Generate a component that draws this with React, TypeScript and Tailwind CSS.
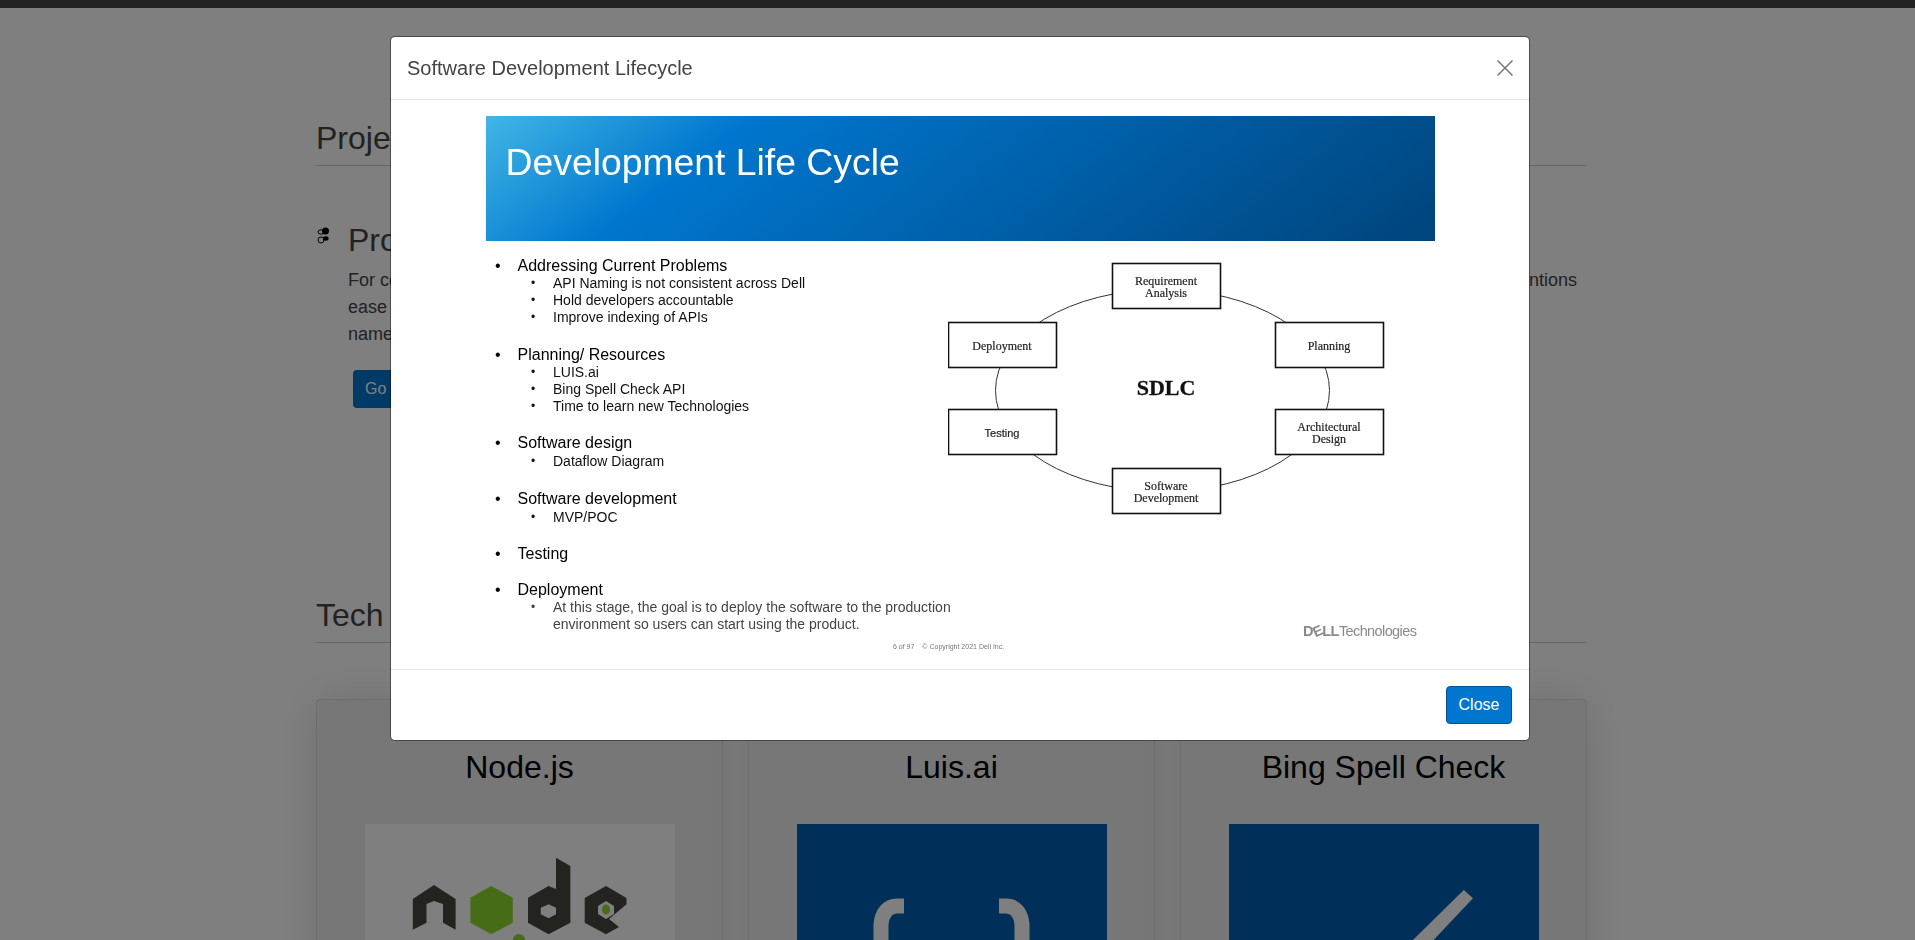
const sans = "font-['Liberation_Sans',Arial,sans-serif]";

type Group = { title: string; subs: string[]; muted?: boolean; gap: string; subGap?: string };

const groups: Group[] = [
  { title: "Addressing Current Problems", gap: "mt-0", subs: ["API Naming is not consistent across Dell", "Hold developers accountable", "Improve indexing of APIs"] },
  { title: "Planning/ Resources", gap: "mt-[20px]", subs: ["LUIS.ai", "Bing Spell Check API", "Time to learn new Technologies"] },
  { title: "Software design", gap: "mt-[19px]", subGap: "mt-px", subs: ["Dataflow Diagram"] },
  { title: "Software development", gap: "mt-[20px]", subGap: "mt-px", subs: ["MVP/POC"] },
  { title: "Testing", gap: "mt-[19px]", subs: [] },
  { title: "Deployment", gap: "mt-[18px]", subs: ["At this stage, the goal is to deploy the software to the production\nenvironment so users can start using the product."], muted: true },
];

function Diagram() {
  const serif = "'Liberation Serif',serif";
  const boxes = [
    { x: 164, y: 22, lines: ["Requirement", "Analysis"] },
    { x: 0, y: 81, lines: ["Deployment"] },
    { x: 327, y: 81, lines: ["Planning"] },
    { x: 0, y: 168, lines: ["Testing"], sans: true },
    { x: 327, y: 168, lines: ["Architectural", "Design"] },
    { x: 164, y: 227, lines: ["Software", "Development"] },
  ];
  return (
    <svg width="440" height="290" viewBox="0 0 440 290" className="block shrink-0">
      <ellipse cx="214.5" cy="149.5" rx="167" ry="101" fill="none" stroke="#333" strokeWidth="1" />
      {boxes.map((b) => (
        <g key={b.lines[0]}>
          <rect x={b.x + 0.5} y={b.y + 0.5} width="108" height="45" fill="#fff" stroke="#111" strokeWidth="1.6" />
          {b.lines.map((l, i) => (
            <text
              key={l}
              x={b.x + 54}
              y={b.y + 28 + (i - (b.lines.length - 1) / 2) * 12.4}
              textAnchor="middle"
              fontSize={b.sans ? "11" : "12"}
              fontFamily={b.sans ? "'Liberation Sans',sans-serif" : serif}
              fill="#222"
              stroke="#222"
              strokeWidth="0.2"
            >
              {l}
            </text>
          ))}
        </g>
      ))}
      <text x="218" y="153.5" textAnchor="middle" fontSize="22" fontWeight="700" fontFamily={serif} fill="#111" stroke="#111" strokeWidth="0.3">SDLC</text>
    </svg>
  );
}

function Slide() {
  return (
    <div className="ml-[95px] flex h-[537px] w-[949px] flex-col overflow-hidden bg-white">
      <div className="h-[125px] shrink-0 bg-[linear-gradient(142deg,#41b6e6_0%,#0076ce_24%,#00447c_100%)] pl-[19.5px] pt-[24px] text-[37.33px] leading-[44px] text-white">
        Development Life Cycle
      </div>
      <div className="flex flex-1">
        <div className="w-[462px] shrink-0 pt-[16px]">
          <div className="flex flex-col">
            {groups.map((g) => (
              <div key={g.title} className={g.gap}>
                <div className="relative pl-[31.5px] text-[16px] leading-[18px] text-black">
                  <span className="absolute left-[9px] top-0">•</span>
                  {g.title}
                </div>
                {g.subs.map((s) => (
                  <div key={s} className={`relative whitespace-pre pl-[67px] text-[14px] leading-[17px] ${g.subGap ?? ""} ${g.muted ? "text-[#444]" : "text-[#111]"}`}>
                    <span className="absolute left-[45px] top-0 text-[12px]">•</span>
                    {s}
                  </div>
                ))}
              </div>
            ))}
          </div>
          <div className="mt-[9px] whitespace-nowrap pl-[407px] text-[7px] leading-[10px] text-[#777]">
            6 of 97 <span className="ml-[6px]">© Copyright 2021 Dell Inc.</span>
          </div>
        </div>
        <div className="flex flex-1 flex-col">
          <Diagram />
          <div className="mt-[93px] whitespace-nowrap pl-[355px] text-[14.5px] leading-[14px] text-[#8a8a8a]">
            <span className="font-bold tracking-[-0.5px]">D<span className="inline-block -rotate-[25deg]">E</span>LL</span>
            <span className="tracking-[-0.6px]">Technologies</span>
          </div>
        </div>
      </div>
    </div>
  );
}

function NodeLogo() {
  return (
    <svg width="310" height="117" viewBox="0 0 310 117" className="block">
      <polygon fill="#46463f" points="69,61 90.6,75 90.6,105.7 78,98.7 78,80 69,77 61.5,80 61.5,98.7 47.8,105.7 47.8,75" />
      <polygon fill="#8cd82e" points="126.3,62 147.8,73.7 147.8,98.7 126.3,110.3 105.4,98.7 105.4,73.7" />
      <path fill="#46463f" fillRule="evenodd" d="M191 33.7 205.4 42V98.7L183.5 110.3 163 98.7V73.7L183.5 62 191 65ZM183.5 80.3 191 83.7V90.3L183.5 94.3 175.8 90.3V83.7Z" />
      <path fill="#46463f" fillRule="evenodd" d="M241 62 261.5 74V80.3L244 95 254 103 241 110.3 219.7 98.7V74ZM241 77 233 82V90L241 95 249 90V82Z" />
      <ellipse cx="241" cy="85.5" rx="4" ry="5" fill="#8cd82e" />
      <circle cx="154" cy="116" r="6" fill="#8cd82e" />
    </svg>
  );
}

function LuisLogo() {
  return (
    <svg width="310" height="117" viewBox="0 0 310 117" className="block">
      <path d="M107 82H100C90 82 85 90 84 100V117" fill="none" stroke="#fff" strokeWidth="15" />
      <path d="M202 82H209C219 82 224 90 225 100V117" fill="none" stroke="#fff" strokeWidth="15" />
    </svg>
  );
}

function BingLogo() {
  return (
    <svg width="310" height="117" viewBox="0 0 310 117" className="block">
      <polygon fill="#fff" points="234.8,66 244,74.3 203.6,117 182.9,117" />
    </svg>
  );
}

function Card({ title, blue, children }: { title: string; blue?: boolean; children: React.ReactNode }) {
  return (
    <div className="h-[300px] rounded-[4px] border border-[#ddd] bg-[#eeeeee] pt-[48px] text-center shadow-[0_0_40px_rgba(0,0,0,0.12)]">
      <div className="text-[32px] leading-[38px] text-black">{title}</div>
      <div className={`mx-auto mt-[38px] h-[200px] w-[310px] ${blue ? "bg-[#0060b2]" : "bg-white"}`}>{children}</div>
    </div>
  );
}

function SmallIcon() {
  return (
    <svg width="16" height="18" viewBox="0 0 16 18" className="mt-[6px] shrink-0">
      <circle cx="9.5" cy="4" r="3.5" fill="#000" />
      <ellipse cx="9.8" cy="11.5" rx="2.8" ry="2.2" fill="#000" />
      <ellipse cx="5" cy="5" rx="3" ry="2.2" fill="none" stroke="#000" strokeWidth="1" />
      <circle cx="5" cy="13" r="3" fill="none" stroke="#000" strokeWidth="1" />
    </svg>
  );
}

function Page() {
  return (
    <div className="h-full bg-white">
      <div className="h-[8px] bg-[#444]" />
      <div className="ml-[316px] w-[1271px]">
        <h2 className="mt-[111px] border-b border-[#ccc] pb-[8px] text-[32px] leading-[38px] text-[#444]">Project</h2>
        <div className="mt-[55px] flex">
          <div className="w-[32px] shrink-0"><SmallIcon /></div>
          <div className="flex-1">
            <h3 className="text-[32px] leading-[38px] text-[#444]">Problem</h3>
            <div className="mt-[8px] text-[18px] leading-[27px] text-[#444]">
              <div className="flex justify-between pr-[10px]"><span>For consistent</span><span>conventions</span></div>
              <div>ease of use</div>
              <div>names</div>
            </div>
            <button className="ml-[5px] mt-[22px] h-[38px] rounded-[4px] bg-[#0076ce] px-[12px] text-[16px] text-white">Go to</button>
          </div>
        </div>
        <h2 className="mt-[188px] border-b border-[#ccc] pb-[8px] text-[32px] leading-[38px] text-[#444]">Tech Stack</h2>
        <div className="mt-[56px] grid grid-cols-3 gap-[25px]">
          <Card title="Node.js"><NodeLogo /></Card>
          <Card title="Luis.ai" blue><LuisLogo /></Card>
          <Card title="Bing Spell Check" blue><BingLogo /></Card>
        </div>
      </div>
    </div>
  );
}

export default function App() {
  return (
    <div className={`relative h-[940px] overflow-hidden ${sans}`}>
      <Page />
      <div className="fixed inset-0 bg-black/50" />
      <div className="fixed inset-0 pl-[390px] pt-[36px]">
        <div className="flex h-[705px] w-[1140px] flex-col overflow-hidden rounded-[5px] border border-black/40 bg-white bg-clip-padding">
          <div className="flex h-[63px] shrink-0 items-center justify-between border-b border-[#e5e5e5] pl-[16px] pr-[16px]">
            <span className="text-[20px] text-[#444]">Software Development Lifecycle</span>
            <svg width="16" height="16" viewBox="0 0 16 16" aria-label="Close">
              <path d="M.5.5 15.5 15.5M15.5.5.5 15.5" stroke="#777" strokeWidth="1.5" fill="none" />
            </svg>
          </div>
          <div className="flex-1 pt-[16px]"><Slide /></div>
          <div className="flex h-[71px] shrink-0 items-center justify-end border-t border-[#e5e5e5] pr-[17px]">
            <button className="h-[38px] w-[66px] rounded-[4px] border border-[#00539a] bg-[#0076ce] text-[16px] text-white">Close</button>
          </div>
        </div>
      </div>
    </div>
  );
}
